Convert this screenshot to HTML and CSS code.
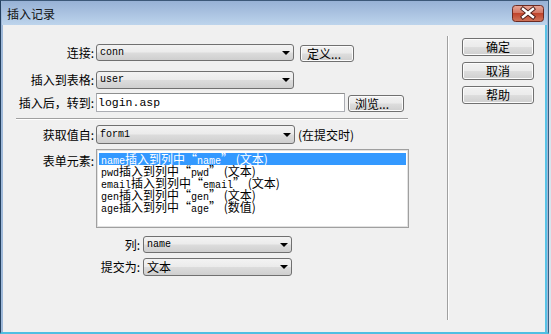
FILE: index.html
```html
<!DOCTYPE html>
<html>
<head>
<meta charset="utf-8">
<link rel="stylesheet" href="styles.css">
</head>
<body>
<div class="window">
  <div class="titlebar">
    <span class="title">插入记录</span>
    <div class="close">
      <svg width="32" height="17" viewBox="0 0 32 17">
        <defs>
          <linearGradient id="cg" x1="0" y1="0" x2="0" y2="1">
            <stop offset="0" stop-color="#e8a89a"/>
            <stop offset="0.45" stop-color="#d47865"/>
            <stop offset="0.5" stop-color="#c0442c"/>
            <stop offset="1" stop-color="#d0765c"/>
          </linearGradient>
        </defs>
        <rect x="0.5" y="0.5" width="31" height="16" rx="3" fill="url(#cg)" stroke="#6b2a22"/>
        <path d="M11 4 L21 12 M21 4 L11 12" stroke="#4a1a16" stroke-width="4.2" stroke-linecap="square"/>
        <path d="M11 4 L21 12 M21 4 L11 12" stroke="#ffffff" stroke-width="2.4" stroke-linecap="square"/>
      </svg>
    </div>
  </div>
  <div class="content">
    <div class="form">
      <div class="row r1">
        <span class="lbl">连接:</span>
        <div class="select w-conn"><span class="val">conn</span><i class="arrow"></i></div>
        <div class="btn b-def">定义...</div>
      </div>
      <div class="row r2">
        <span class="lbl">插入到表格:</span>
        <div class="select w-conn"><span class="val">user</span><i class="arrow"></i></div>
      </div>
      <div class="row r3">
        <span class="lbl">插入后，转到:</span>
        <div class="input"><span class="ival">login.asp</span></div>
        <div class="btn b-browse">浏览...</div>
      </div>
      <div class="hsep"></div>
      <div class="row r4">
        <span class="lbl">获取值自:</span>
        <div class="select w-form"><span class="val">form1</span><i class="arrow"></i></div>
        <span class="note">(在提交时)</span>
      </div>
      <div class="row r5">
        <span class="lbl lbl-top">表单元素:</span>
        <div class="listbox">
          <div class="item sel"><span class="m">name</span>插入到列中“<span class="m">name</span>” (文本)</div>
          <div class="item"><span class="m">pwd</span>插入到列中“<span class="m">pwd</span>” (文本)</div>
          <div class="item"><span class="m">email</span>插入到列中“<span class="m">email</span>” (文本)</div>
          <div class="item"><span class="m">gen</span>插入到列中“<span class="m">gen</span>” (文本)</div>
          <div class="item"><span class="m">age</span>插入到列中“<span class="m">age</span>” (数值)</div>
        </div>
      </div>
      <div class="row r6">
        <span class="lbl lbl-wide">列:</span>
        <div class="select w-col"><span class="val">name</span><i class="arrow"></i></div>
      </div>
      <div class="row r7">
        <span class="lbl lbl-wide">提交为:</span>
        <div class="select w-col"><span class="val cjk">文本</span><i class="arrow"></i></div>
      </div>
    </div>
    <div class="vsep"></div>
    <div class="actions">
      <div class="btn abtn">确定</div>
      <div class="btn abtn">取消</div>
      <div class="btn abtn">帮助</div>
    </div>
  </div>
</div>
</body>
</html>
```

FILE: styles.css
```css
* { box-sizing: border-box; }
html, body { margin: 0; padding: 0; }
body {
  width: 551px;
  height: 334px;
  background: #d8e4ee;
  font-family: "Noto Sans CJK SC", "Liberation Sans", sans-serif;
  font-size: 12px;
  color: #000;
  overflow: hidden;
}
.window {
  width: 549px;
  height: 334px;
  border-top: 1px solid #3c5878;
  border-left: 1px solid #24405f;
  border-right: 1px solid #3a5f80;
  border-bottom: 2px solid #4fbfe2;
  background: #9fb9d9;
  display: flex;
  flex-direction: column;
}
.titlebar {
  height: 24px;
  flex: none;
  background: linear-gradient(#97b1d5, #bdd4ec);
  display: flex;
  align-items: center;
  justify-content: space-between;
  padding: 0 3px 0 5px;
  margin: 0 1px;
}
.title {
  font-size: 12px;
  line-height: 14px;
  color: #111;
  margin-top: 1px;
}
.close {
  width: 32px;
  height: 17px;
  margin-top: 1px;
  display: flex;
}
.content {
  flex: 1;
  background: #f0f0f0;
  margin: 0 1px 0 2px;
  border-right: 2px solid #58c3e6;
  display: flex;
}
.form {
  width: 444px;
  display: flex;
  flex-direction: column;
}
.row {
  display: flex;
  align-items: center;
}
.lbl {
  width: 91px;
  text-align: right;
  margin-right: 2px;
  line-height: 14px;
  white-space: nowrap;
}
.lbl-wide { width: 137px; margin-right: 3px; }
.r1 { margin-top: 19px; height: 17px; }
.r2 { margin-top: 10px; height: 18px; }
.r3 { margin-top: 4px; height: 19px; }
.r4 { margin-top: 5px; height: 19px; }
.r5 { margin-top: 5px; height: 79px; align-items: flex-start; }
.r6 { margin-top: 8px; height: 17px; }
.r7 { margin-top: 5px; height: 18px; }

.select {
  height: 100%;
  border: 1px solid #707070;
  border-radius: 3px;
  background: linear-gradient(#f3f3f3 0%, #ebebeb 48%, #dcdcdc 52%, #cfcfcf 100%);
  display: flex;
  align-items: center;
  justify-content: space-between;
  padding: 0 3px 0 3px;
}
.w-conn { width: 198px; }
.w-form { width: 199px; }
.w-col { width: 149px; }
.val {
  font-family: "Liberation Mono", monospace;
  font-size: 10px;
  line-height: 12px;
}
.val.cjk {
  font-family: "Noto Sans CJK SC", sans-serif;
  font-size: 12px;
  line-height: 14px;
}
.arrow {
  width: 0;
  height: 0;
  border-left: 4px solid transparent;
  border-right: 4px solid transparent;
  border-top: 4px solid #000;
}
.btn {
  border: 1px solid #707070;
  border-radius: 3px;
  background: linear-gradient(#f2f2f2 0%, #ebebeb 48%, #dddddd 52%, #cfcfcf 100%);
  box-shadow: inset 0 0 0 1px #fcfcfc;
  display: flex;
  align-items: center;
  justify-content: center;
  font-size: 12px;
  line-height: 14px;
}
.b-def {
  width: 54px;
  height: 17px;
  margin-left: 6px;
  align-self: flex-start;
  margin-top: 1px;
  justify-content: flex-start;
  padding-left: 6px;
}
.b-browse {
  width: 56px;
  height: 17px;
  margin-left: 3px;
  align-self: flex-end;
  justify-content: flex-start;
  padding-left: 6px;
}
.input {
  width: 249px;
  height: 100%;
  background: #fff;
  border: 1px solid #abadb3;
  border-top-color: #8e8f8f;
  display: flex;
  align-items: center;
  padding-left: 1px;
}
.ival {
  font-family: "Liberation Mono", monospace;
  font-size: 11.5px;
  line-height: 14px;
}
.hsep {
  margin: 6px 0 0 13px;
  width: 392px;
  height: 2px;
  border-top: 1px solid #a0a0a0;
  border-bottom: 1px solid #ffffff;
}
.note {
  margin-left: 3px;
  font-size: 12px;
  line-height: 14px;
}
.lbl-top { margin-top: 5px; }
.listbox {
  width: 313px;
  height: 79px;
  background: #fff;
  border: 1px solid #a0a0a0;
  box-shadow: inset 0 0 0 1px #e2e2e2;
  padding: 3px 2px 1px 2px;
  display: flex;
  flex-direction: column;
}
.item {
  height: 12px;
  flex: none;
  line-height: 12px;
  font-size: 12px;
  padding-left: 2px;
  white-space: nowrap;
}
.item .m {
  font-family: "Liberation Mono", monospace;
  font-size: 10px;
}
.item.sel {
  background: #3399ff;
  color: #fff;
}
.vsep {
  width: 2px;
  margin-top: 11px;
  height: 284px;
  border-left: 1px solid #a0a0a0;
  border-right: 1px solid #ffffff;
}
.actions {
  margin-left: 13px;
  padding-top: 13px;
  display: flex;
  flex-direction: column;
  gap: 6px;
}
.abtn {
  width: 72px;
  height: 18px;
}
```
